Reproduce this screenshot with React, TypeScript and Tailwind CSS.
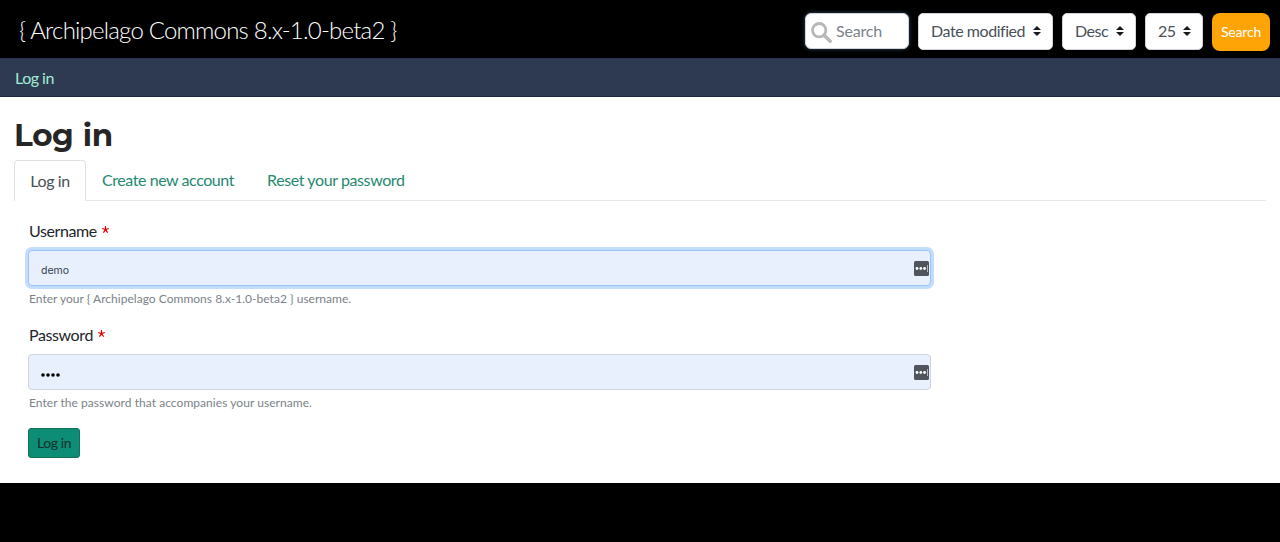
import type { ReactNode } from "react";

function Caret() {
  return (
    <svg className="h-[10px] w-[8px] shrink-0" viewBox="0 0 4 5" aria-hidden="true">
      <path fill="#15191d" d="M2 0L0 2h4zm0 5L0 3h4z" />
    </svg>
  );
}

function Select({ label, className }: { label: string; className: string }) {
  return (
    <button
      className={`flex h-[37px] items-center justify-between rounded-[5px] border border-[#ced4da] bg-white pr-[11px] pb-px pl-[12px] text-[16px] tracking-[-0.45px] whitespace-nowrap text-[#495057] ${className}`}
    >
      <span className="mb-px">{label}</span>
      <Caret />
    </button>
  );
}

function ManagerIcon() {
  return (
    <svg className="h-[15px] w-[15px]" viewBox="0 0 15 15" aria-hidden="true">
      <rect width="15" height="15" rx="1.5" fill="#50555c" />
      <circle cx="3" cy="7.5" r="1.4" fill="#fff" />
      <circle cx="6.8" cy="7.5" r="1.4" fill="#fff" />
      <circle cx="10.6" cy="7.5" r="1.4" fill="#fff" />
      <rect x="13" y="4" width="1" height="7" fill="#b5b8bc" />
    </svg>
  );
}

function Label({ children }: { children: ReactNode }) {
  return (
    <label className="flex h-[24px] items-center pl-px text-[16px] tracking-[-0.4px] text-[#212529]">
      {children}
      <svg className="mb-[4px] ml-[5px] h-[7px] w-[7px]" viewBox="0 0 7 7" aria-hidden="true">
        <path d="M3.5 0v3.6M.2 2.5l3.3 1.1 3.3-1.1M1.4 6.7l2.1-3.1 2.1 3.1" fill="none" stroke="#e00000" strokeWidth="1.2" />
      </svg>
    </label>
  );
}

export default function App() {
  return (
    <div className="flex h-[542px] w-[1280px] flex-col overflow-hidden bg-black font-['Lato',sans-serif]">
      <header className="flex h-[58px] shrink-0 items-start justify-between bg-black pr-[10px] pl-[19px]">
        <a className="mt-[12px] text-[24px] leading-[36px] font-light tracking-[-0.79px] whitespace-nowrap text-white">
          {"{ Archipelago Commons 8.x-1.0-beta2 }"}
        </a>
        <form className="mt-[13px] flex items-start">
          <div className="mr-[9px] flex h-[36px] w-[104px] items-center rounded-[6px] border border-[#ced4da] bg-white pl-[5px] text-[16px] tracking-[-0.2px] text-[#7b8288] shadow-[0_0_4px_#34495e]">
            <svg className="mt-[3px] mr-[4px] h-[21px] w-[21px]" viewBox="0 0 21 21" aria-hidden="true">
              <circle cx="8.2" cy="8.2" r="6.7" fill="none" stroke="#b7b7b7" strokeWidth="2.8" />
              <path d="M13.2 13.2l6 6" stroke="#b7b7b7" strokeWidth="3.4" strokeLinecap="round" />
            </svg>
            Search
          </div>
          <Select label="Date modified" className="mr-[9px] w-[135px]" />
          <Select label="Desc" className="mr-[9px] w-[74px]" />
          <Select label="25" className="mr-[9px] w-[58px]" />
          <button className="h-[38px] w-[58px] rounded-[8px] bg-[#ffa407] pb-px text-[14px] tracking-[-0.2px] text-white">
            Search
          </button>
        </form>
      </header>
      <nav className="flex h-[39px] shrink-0 items-center border-t border-b border-t-[#26344b] border-b-[#1f2945] bg-[#2d3a52] pl-[15px]">
        <a className="text-[16px] tracking-[-0.5px] text-[#a5ebd5]">Log in</a>
      </nav>
      <main className="flex h-[386px] shrink-0 flex-col bg-white pr-[14px] pl-[14px]">
        <h1 className="mt-[18px] h-[40px] font-['Montserrat','Inter',sans-serif] text-[31px] leading-[40px] font-bold tracking-[-0.4px] [word-spacing:1px] text-[#262626]">
          Log in
        </h1>
        <div className="mt-[5px] flex h-[41px] shrink-0 border-b border-[#e6e8ea] text-[16px]">
          <a className="-mb-px flex h-[41px] w-[72px] items-center justify-center rounded-t-[4px] border border-b-0 border-[#dee2e6] bg-white pb-px tracking-[-0.4px] text-[#495057]">
            Log in
          </a>
          <a className="ml-[16px] flex items-center tracking-[-0.43px] text-[#258870]">Create new account</a>
          <a className="ml-[33px] flex items-center tracking-[-0.4px] text-[#258870]">Reset your password</a>
        </div>
        <form className="flex w-[917px] flex-col pl-[14px]">
          <div className="mt-[18px]">
            <Label>Username</Label>
          </div>
          <div className="mt-[7px] flex h-[36px] items-center justify-between rounded-[4px] border border-[#9ac3f8] bg-[#e8f0fe] pr-px pl-[12px] shadow-[0_0_0_3px_#c4dcff]">
            <span className="mt-[5px] font-['Inter',sans-serif] text-[10.5px] text-[#333d4b]">demo</span>
            <ManagerIcon />
          </div>
          <p className="mt-[4px] h-[18px] pl-px text-[12px] leading-[18px] tracking-[0.02px] text-[#7b8288]">
            {"Enter your { Archipelago Commons 8.x-1.0-beta2 } username."}
          </p>
          <div className="mt-[15px]">
            <Label>Password</Label>
          </div>
          <div className="mt-[7px] flex h-[36px] items-center justify-between rounded-[4px] border border-[#ced4da] bg-[#e8f0fe] pr-px pl-[12px]">
            <svg className="mt-[5px] h-[4px] w-[20px]" viewBox="0 0 20 4" role="img">
              <circle cx="2" cy="2" r="1.8" />
              <circle cx="7" cy="2" r="1.8" />
              <circle cx="12" cy="2" r="1.8" />
              <circle cx="17" cy="2" r="1.8" />
            </svg>
            <ManagerIcon />
          </div>
          <p className="mt-[4px] h-[18px] pl-px text-[12px] leading-[18px] tracking-[0.05px] text-[#7b8288]">
            Enter the password that accompanies your username.
          </p>
          <button className="mt-[16px] h-[30px] w-[52px] rounded-[3px] border border-[#13705b] bg-[#0d8d75] pb-px text-[14px] tracking-[-0.4px] text-[#12302a]">
            Log in
          </button>
        </form>
      </main>
    </div>
  );
}
